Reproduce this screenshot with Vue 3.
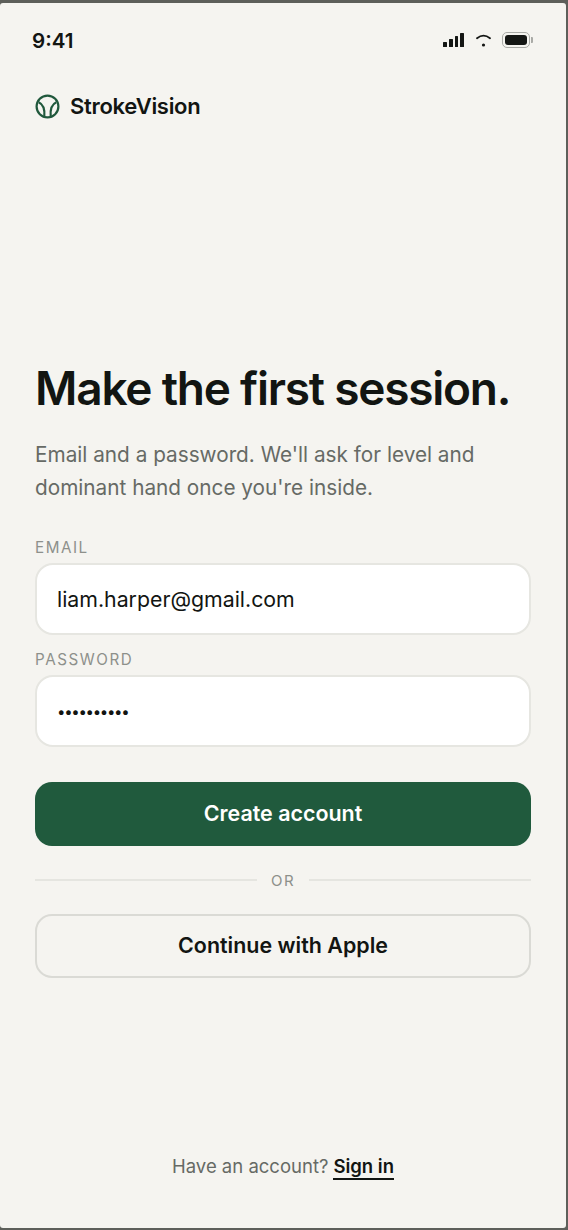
<script setup>
import { ref } from 'vue'

const email = ref('liam.harper@gmail.com')
const password = ref('••••••••••')
const bars = [5, 8, 11, 14]
</script>

<template>
  <div class="screen">
    <header class="status">
      <span class="time">9:41</span>
      <div class="status-icons">
        <div class="signal">
          <i v-for="h in bars" :key="h" class="bar" :style="{ height: h + 'px' }"></i>
        </div>
        <svg class="wifi" width="15" height="14" viewBox="0 0 15 14" fill="none">
          <path d="M1 5.2Q7.5 0 14 5.2" stroke="#141614" stroke-width="1.8" stroke-linecap="round" />
          <circle cx="7.5" cy="12" r="1.6" fill="#141614" />
        </svg>
        <div class="battery">
          <div class="battery-body"><div class="battery-fill"></div></div>
          <div class="battery-cap"></div>
        </div>
      </div>
    </header>

    <div class="brand">
      <svg width="25" height="25" viewBox="0 0 25 25" fill="none" stroke="#20583c" stroke-width="2.2">
        <circle cx="12.5" cy="12.5" r="10.9" />
        <path d="M3.6 8.2C7.8 10 10 15 9.3 22.6" />
        <path d="M21.4 8.2C17.2 10 15 15 15.7 22.6" />
      </svg>
      <span class="brand-name">StrokeVision</span>
    </div>

    <main class="main">
      <h1 class="title">Make the first session.</h1>
      <p class="lead">Email and a password. We'll ask for level and dominant hand once you're inside.</p>

      <form class="form" @submit.prevent>
        <label class="label" for="email">EMAIL</label>
        <input id="email" v-model="email" class="input" type="text" />
        <label class="label second" for="password">PASSWORD</label>
        <input id="password" v-model="password" class="input dots" type="text" />
        <button class="btn primary" type="submit">Create account</button>
        <div class="divider"><span class="rule"></span><span class="or">OR</span><span class="rule"></span></div>
        <button class="btn outline" type="button">Continue with Apple</button>
      </form>
    </main>

    <footer class="footer">
      <span>Have an account?</span>
      <a class="signin" href="#" @click.prevent>Sign in</a>
    </footer>
  </div>
</template>

<style>
html, body { margin: 0; background: #5d5f5a; }
</style>

<style scoped>
.screen {
  box-sizing: border-box;
  width: 566px;
  height: 1225px;
  margin: 3px 2px 2px 0;
  border-radius: 3px;
  background: #f5f4f0;
  padding: 0 35px;
  display: flex;
  flex-direction: column;
  font-family: Inter, "Liberation Sans", sans-serif;
  color: #121512;
}
.status {
  height: 74px;
  flex: none;
  display: flex;
  align-items: center;
  justify-content: space-between;
  margin: 0 -2px 0 -3px;
}
.time { font-size: 20.6px; font-weight: 600; }
.status-icons { display: flex; align-items: center; gap: 11px; }
.signal { display: flex; align-items: flex-end; gap: 2px; height: 14px; margin-right: 1px; }
.bar { width: 3.75px; background: #141614; border-radius: 0.5px; }
.wifi { display: block; }
.battery { display: flex; align-items: center; gap: 1px; }
.battery-body {
  box-sizing: border-box;
  width: 28px;
  height: 16px;
  padding: 2px;
  border: 1px solid #a9aaa6;
  border-radius: 5px;
}
.battery-fill { height: 100%; background: #141614; border-radius: 3px; }
.battery-cap { width: 2px; height: 6px; background: #a9aaa6; border-radius: 0 1px 1px 0; }
.brand {
  display: flex;
  align-items: center;
  gap: 10px;
  height: 25px;
  margin-top: 17px;
  flex: none;
}
.brand svg { display: block; }
.brand-name { font-size: 22px; line-height: 25px; padding-bottom: 1px; font-weight: 600; letter-spacing: -0.3px; }
.main { flex: none; margin-top: 241px; }
.title {
  margin: 0;
  font-size: 46px;
  line-height: 56px;
  font-weight: 600;
  letter-spacing: -1.23px;
  white-space: nowrap;
}
.lead {
  margin: 22px 0 0;
  font-size: 20.75px;
  line-height: 33px;
  color: #666a65;
}
.form { display: flex; flex-direction: column; margin-top: 35px; }
.label {
  font-size: 15.2px;
  line-height: 17px;
  letter-spacing: 1.55px;
  color: #8d908b;
  margin-bottom: 7px;
}
.label.second { margin-top: 16px; }
.input {
  box-sizing: border-box;
  width: 100%;
  height: 72px;
  padding: 0 20px;
  background: #fff;
  border: 2px solid #e6e6e1;
  border-radius: 18px;
  font: 400 21.3px Inter, "Liberation Sans", sans-serif;
  color: #121512;
  outline: none;
}
.input.dots { font-size: 15px; letter-spacing: -1.3px; }
.btn {
  height: 64px;
  box-sizing: border-box;
  padding: 0 0 2px;
  border-radius: 17px;
  font: 600 21.45px Inter, "Liberation Sans", sans-serif;
  flex: none;
}
.primary {
  margin-top: 35px;
  background: #205a3d;
  border: none;
  color: #fff;
}
.outline {
  background: transparent;
  border: 2px solid #dadad5;
  color: #121512;
}
.divider { display: flex; align-items: center; gap: 14px; height: 68px; }
.rule { flex: 1; height: 2px; background: #e5e5e0; }
.or { font-size: 15px; letter-spacing: 1.4px; color: #8d908b; }
.footer {
  margin-top: auto;
  margin-bottom: 48px;
  display: flex;
  justify-content: center;
  gap: 5px;
  font-size: 18.5px;
  line-height: 24px;
  color: #666a65;
}
.signin {
  color: #121512;
  font-weight: 600;
  text-decoration: none;
  border-bottom: 2px solid #121512;
}
</style>
